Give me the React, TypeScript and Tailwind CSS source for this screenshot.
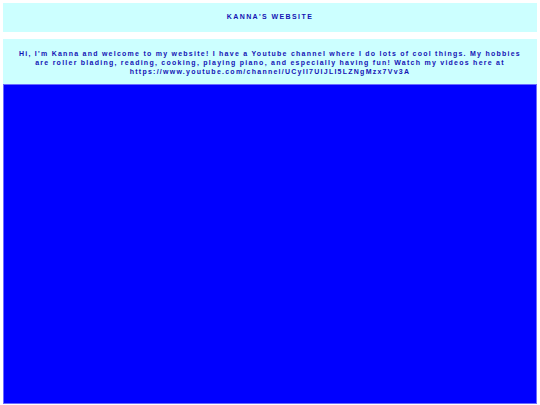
export default function App() {
  return (
    <div
      className="min-h-[405px] bg-white px-[3px] pt-[3px] text-[#1414b4]"
      style={{ fontFamily: '"Liberation Sans", Arial, sans-serif' }}
    >
      <div className="flex h-[29px] items-center justify-center bg-[#ccffff] text-[7px] font-bold tracking-[1.4px]">
        KANNA'S WEBSITE
      </div>
      <div className="mt-[7px] bg-[#ccffff] px-2 pb-[8px] pt-[10px] text-center text-[7px] leading-[9px] font-bold tracking-[1.25px]">
        Hi, I'm Kanna and welcome to my website! I have a Youtube channel where I do lots of cool things. My hobbies
        are roller blading, reading, cooking, playing piano, and especially having fun! Watch my videos here at
        https://www.youtube.com/channel/UCylI7UIJLI5LZNgMzx7Vv3A
      </div>
      <div className="h-[320px] border border-[#6b6bff] bg-[#0000ff]"></div>
    </div>
  );
}
